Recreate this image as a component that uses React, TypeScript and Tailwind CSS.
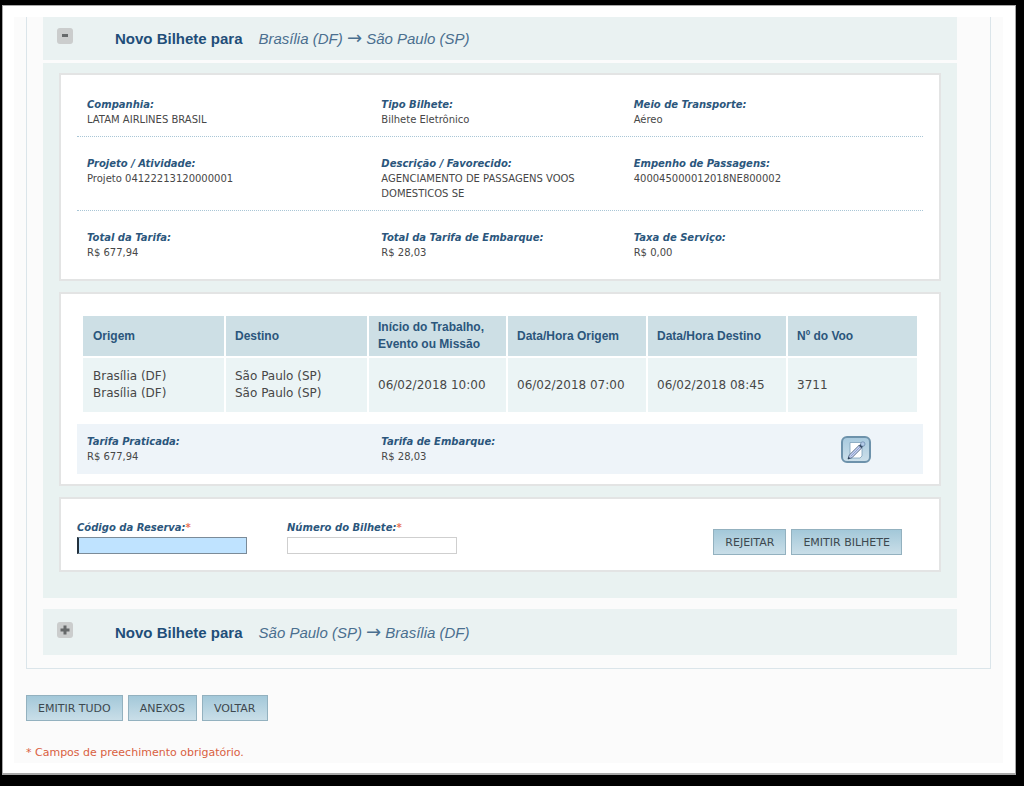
import type { ReactNode } from "react";
import { clsx } from "clsx";

type FieldProps = {
  label: string;
  children: ReactNode;
};

const flightColumns = [
  { title: "Origem", width: "w-[142px]" },
  { title: "Destino", width: "w-[143px]" },
  { title: "Início do Trabalho, Evento ou Missão", width: "w-[139px]" },
  { title: "Data/Hora Origem", width: "w-[140px]" },
  { title: "Data/Hora Destino", width: "w-[140px]" },
  { title: "Nº do Voo", width: "" },
];

const flights = [
  [
    ["Brasília (DF)", "Brasília (DF)"],
    ["São Paulo (SP)", "São Paulo (SP)"],
    ["06/02/2018 10:00"],
    ["06/02/2018 07:00"],
    ["06/02/2018 08:45"],
    ["3711"],
  ],
];

// --------------------
// Small pieces
// --------------------
function Field({ label, children }: FieldProps) {
  return (
    <div>
      <dt className="font-bold italic text-[#2b567c]">{label}</dt>
      <dd className="max-w-[210px]">{children}</dd>
    </div>
  );
}

function FieldRow({ className, children }: { className?: string; children: ReactNode }) {
  return (
    <dl className={clsx("grid grid-cols-[294fr_252fr_279fr] px-[10px]", className)}>
      {children}
    </dl>
  );
}

function Card({ className, children }: { className?: string; children: ReactNode }) {
  return (
    <section className={clsx("border-2 border-[#e3e4e4] bg-white", className)}>
      {children}
    </section>
  );
}

function Button({ children }: { children: ReactNode }) {
  return (
    <button
      type="button"
      className="h-[26px] border border-[#93b1bf] bg-linear-to-b from-[#a3c8d9] to-[#c9dee8] px-[11px] text-[11px] text-[#3d484f]"
    >
      {children}
    </button>
  );
}

function TicketHeader({ open, from, to }: { open: boolean; from: string; to: string }) {
  return (
    <div
      className={clsx(
        "flex items-center bg-[#eaf2f2] pl-[14px] font-['Liberation_Sans',Arial,sans-serif]",
        open ? "h-[43px] pb-[2px]" : "h-[46px]"
      )}
    >
      <button
        type="button"
        aria-expanded={open}
        aria-label={open ? "Recolher bilhete" : "Expandir bilhete"}
        className="mr-[42px] mb-1 size-4 shrink-0 rounded-[3px] bg-[#cbcdcd]"
      >
        <svg viewBox="0 0 16 16" className="size-4" fill="#66696a">
          {open ? (
            <rect x="5" y="6" width="6" height="3" />
          ) : (
            <path d="M6.500 3.500h3v3h3v3h-3v3h-3v-3h-3v-3h3z" />
          )}
        </svg>
      </button>
      <h2 className="text-[15px] text-[#1f4e79]">
        <strong className="mr-4">Novo Bilhete para</strong>
        <em className="text-[#4a6f8f]">
          {from} <span className="font-['DejaVu_Sans'] text-lg leading-none not-italic">→</span> {to}
        </em>
      </h2>
    </div>
  );
}

function TextField({ id, label, focused }: { id: string; label: string; focused?: boolean }) {
  return (
    <div className="flex flex-col">
      <label htmlFor={id} className="mb-[2px] font-bold italic text-[#2b567c]">
        {label}
        <span className="not-italic text-[#e8735a]">*</span>
      </label>
      <input
        id={id}
        type="text"
        className={clsx(
          "h-[17px] w-[170px] border px-1 outline-none",
          focused
            ? "border-[#7b8b98] border-l-2 border-l-[#23303c] bg-[#bfe3ff]"
            : "border-[#cfcfcf] bg-white"
        )}
      />
    </div>
  );
}

function EditIcon() {
  return (
    <svg viewBox="0 0 20 20" className="size-5">
      <path d="M4 2.500h12v13.500l-2 2h-10z" fill="#fff" stroke="#7c9fb9" strokeWidth="0.8" />
      <path d="M3.200 15.200l9.800-9.800 2.600 2.600-9.800 9.800-3.800 1.200z" fill="#c9d3f2" stroke="#4a6280" strokeWidth="0.9" />
      <path d="M4.500 16.500l9.800-9.800" fill="none" stroke="#7f93c8" strokeWidth="0.8" />
      <path d="M13 5.400l1.700-1.700 2.600 2.600-1.700 1.700z" fill="#2f435c" />
      <circle cx="16.800" cy="4" r="2.200" fill="#b5cbe8" stroke="#6d8dad" strokeWidth="0.8" />
      <path d="M1.800 19.200l0.900-2.500 1.600 1.600z" fill="#24364c" />
    </svg>
  );
}

// --------------------
// Flight table
// --------------------
function FlightTable() {
  return (
    <table className="w-full table-fixed border-collapse text-left text-xs leading-[17px]">
      <thead>
        <tr className="h-[41px] bg-[#cddfe5] font-['Liberation_Sans',Arial,sans-serif] text-[#2b567c]">
          {flightColumns.map((col) => (
            <th
              key={col.title}
              scope="col"
              className={clsx(
                "border-l-2 border-white px-[9px] font-bold first:border-l-0 first:pl-[10px]",
                col.width
              )}
            >
              {col.title}
            </th>
          ))}
        </tr>
      </thead>
      <tbody>
        {flights.map((row, i) => (
          <tr key={i} className="h-[55px] bg-[#ebf4f5]">
            {row.map((lines, j) => (
              <td
                key={j}
                className="border-l-2 border-t-2 border-white pl-[9px] whitespace-nowrap first:border-l-0 first:pl-[10px]"
              >
                {lines.map((line, k) => (
                  <div key={k}>{line}</div>
                ))}
              </td>
            ))}
          </tr>
        ))}
      </tbody>
    </table>
  );
}

export default function App() {
  return (
    <div className="flex min-h-screen flex-col bg-black pt-[5px] pr-2 pb-[11px] pl-[2px] font-['DejaVu_Sans',Verdana,sans-serif] text-[10px] leading-[15px] text-[#474747]">
      <div className="flex flex-1 flex-col border border-b-2 border-[#a8a8a8] bg-white pt-[11px] pr-3 pb-[10px] pl-[11px]">
        <main className="flex-1 bg-[#fbfbfb] px-3">
          <div className="border-x border-b border-[#dbe5ea] pr-[33px] pb-[13px] pl-4">
            {/* Ida */}
            <TicketHeader open from="Brasília (DF)" to="São Paulo (SP)" />
            <div className="mt-[3px] mb-[11px] flex flex-col gap-[11px] bg-[#e9f2f1] px-4 pt-[10px] pb-[26px]">
              <Card className="px-4 pt-[22px] pb-[19px]">
                <FieldRow className="border-b border-dotted border-[#a9c6d6] pb-[9px]">
                  <Field label="Companhia:">LATAM AIRLINES BRASIL</Field>
                  <Field label="Tipo Bilhete:">Bilhete Eletrônico</Field>
                  <Field label="Meio de Transporte:">Aéreo</Field>
                </FieldRow>
                <FieldRow className="border-b border-dotted border-[#a9c6d6] pt-[19px] pb-[9px]">
                  <Field label="Projeto / Atividade:">Projeto 04122213120000001</Field>
                  <Field label="Descrição / Favorecido:">
                    AGENCIAMENTO DE PASSAGENS VOOS DOMESTICOS SE
                  </Field>
                  <Field label="Empenho de Passagens:">400045000012018NE800002</Field>
                </FieldRow>
                <FieldRow className="pt-[19px]">
                  <Field label="Total da Tarifa:">R$ 677,94</Field>
                  <Field label="Total da Tarifa de Embarque:">R$ 28,03</Field>
                  <Field label="Taxa de Serviço:">R$ 0,00</Field>
                </FieldRow>
              </Card>

              <Card className="px-4 pt-[22px] pb-[10px]">
                <div className="mb-3 px-[6px]">
                  <FlightTable />
                </div>
                <div className="relative bg-[#eef4f9] py-[10px]">
                  <FieldRow>
                    <Field label="Tarifa Praticada:">R$ 677,94</Field>
                    <Field label="Tarifa de Embarque:">R$ 28,03</Field>
                  </FieldRow>
                  <button
                    type="button"
                    aria-label="Editar tarifa"
                    className="absolute top-3 right-[52px] flex h-[27px] w-[30px] items-center justify-center rounded-md border-2 border-[#6d92ab] bg-linear-to-b from-[#a9cade] to-[#cbdfea]"
                  >
                    <EditIcon />
                  </button>
                </div>
              </Card>

              <Card className="flex items-center justify-between pr-[37px] pl-4 pt-5 pb-[15px]">
                <div className="flex gap-10">
                  <TextField id="codigo-reserva" label="Código da Reserva:" focused />
                  <TextField id="numero-bilhete" label="Número do Bilhete:" />
                </div>
                <div className="flex gap-[5px] pt-[10px]">
                  <Button>REJEITAR</Button>
                  <Button>EMITIR BILHETE</Button>
                </div>
              </Card>
            </div>

            {/* Volta */}
            <TicketHeader open={false} from="São Paulo (SP)" to="Brasília (DF)" />
          </div>

          <div className="mt-[26px] flex gap-[5px]">
            <Button>EMITIR TUDO</Button>
            <Button>ANEXOS</Button>
            <Button>VOLTAR</Button>
          </div>
          <p className="mt-6 text-[11px] text-[#d9603f]">* Campos de preechimento obrigatório.</p>
        </main>
      </div>
    </div>
  );
}
